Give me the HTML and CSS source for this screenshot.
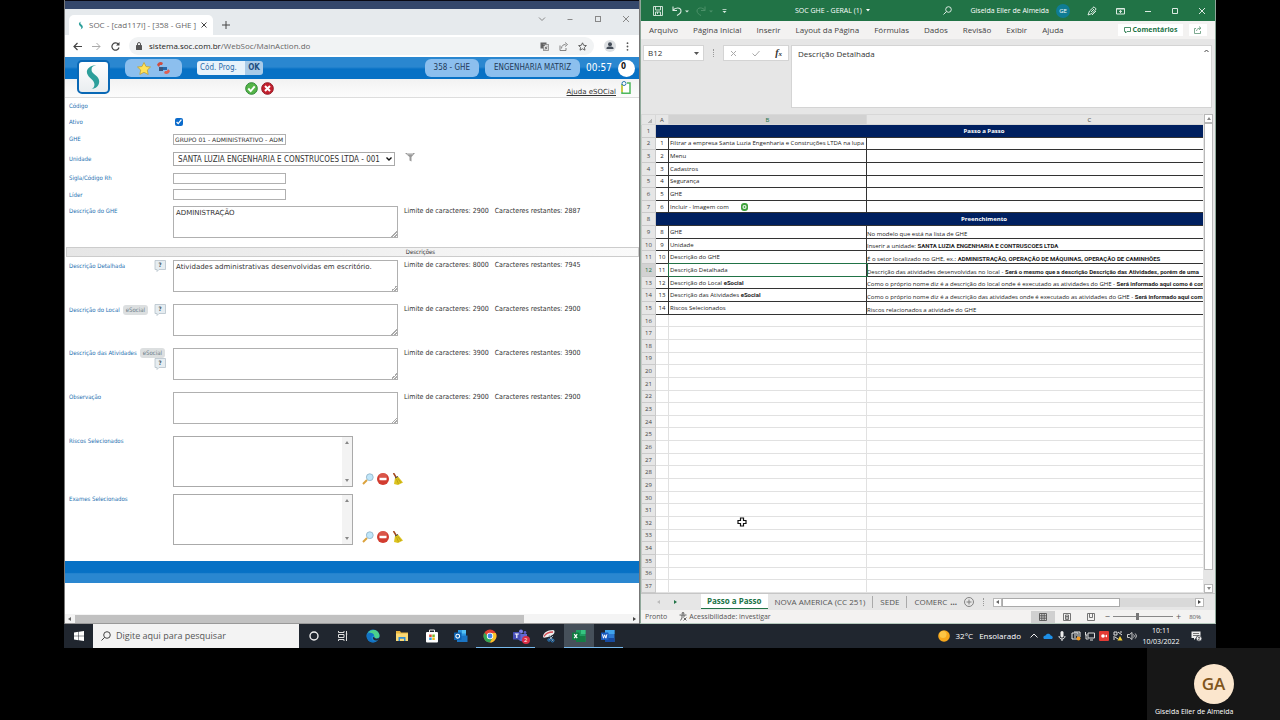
FILE: index.html
```html
<!DOCTYPE html>
<html lang="pt-BR">
<head>
<meta charset="utf-8">
<title>SOC - [cad117i] - [358 - GHE ]</title>
<link rel="stylesheet" href="styles.css">
</head>
<body>
<svg class="defs" aria-hidden="true">
  <symbol id="i-soc" viewBox="0 0 20 28"><path d="M13 1C4 2 1 7 4 12c2 4 7 5 7 10 0 2-1 4-3 5 7-1 10-7 7-12-2-4-8-5-7-10 0-2 2-3 5-4z" fill="#2d9f9b"/></symbol>
  <symbol id="i-lens" viewBox="0 0 12 12"><path d="M1 11l4-4" stroke="#dba23c" stroke-width="2"/><circle cx="7.800" cy="4.200" r="3.400" fill="#bfe6fa" stroke="#9bbccf"/></symbol>
  <symbol id="i-minus" viewBox="0 0 12 12"><circle cx="6" cy="6" r="6" fill="#d23c30"/><circle cx="6" cy="4" r="4" fill="#e0665a" opacity=".6"/><path d="M2.500 4.800h7v2.400h-7z" fill="#fff"/></symbol>
  <symbol id="i-broom" viewBox="0 0 12 12"><path d="M1.500 0l3 5" stroke="#a3441c" stroke-width="1.500"/><path d="M3 5l3-1.500 5 6-5 2.500-4-1z" fill="#dcc31f"/><path d="M3 5l3-1.500" stroke="#444"/><path d="M4.500 6l2 5M6 5.500l3 4.500" stroke="#aa920e" stroke-width=".6"/></symbol>
  <symbol id="i-help" viewBox="0 0 12 12"><path d="M1 .5h10.500v9H5L3 11.500V9.500H1z" fill="#e6edf1" stroke="#b5c2ca" stroke-width=".8"/></symbol>
</svg>

<main class="desktop">
  <section class="window browser">
    <div class="wallpaper"></div>
    <div class="tabstrip">
      <div class="tab">
        <svg class="favicon"><use href="#i-soc"/></svg>
        <span class="tab-title">SOC - [cad117i] - [358 - GHE ]</span>
        <button class="bare" aria-label="Fechar aba"><svg width="6" height="6" viewBox="0 0 6 6" stroke="#444"><path d="M.5.5l5 5M5.500.5l-5 5"/></svg></button>
      </div>
      <button class="bare plus" aria-label="Nova aba"><svg width="8" height="8" viewBox="0 0 8 8" stroke="#444"><path d="M4 0v8M0 4h8"/></svg></button>
      <div class="win-controls">
        <svg viewBox="0 0 8 8"><path d="M1 2.500l3 3 3-3"/></svg>
        <svg viewBox="0 0 8 8"><path d="M1.500 4.500h5"/></svg>
        <svg viewBox="0 0 8 8"><rect x="1.500" y="1.500" width="5" height="5"/></svg>
        <svg viewBox="0 0 8 8"><path d="M1 1l6 6M7 1L1 7"/></svg>
      </div>
    </div>
    <div class="toolbar">
      <button class="bare" aria-label="Voltar"><svg width="9" height="9" viewBox="0 0 9 9" fill="none" stroke="#444" stroke-width="1.200"><path d="M9 4.500H1M4.500 1L1 4.500 4.500 8"/></svg></button>
      <button class="bare" aria-label="Avançar"><svg width="9" height="9" viewBox="0 0 9 9" fill="none" stroke="#aaa"><path d="M0 4.500h8M4.500 1L8 4.500 4.500 8"/></svg></button>
      <button class="bare" aria-label="Recarregar"><svg width="9" height="9" viewBox="0 0 9 9" fill="none" stroke="#444" stroke-width="1.200"><path d="M7.500 2.500A3.600 3.600 0 1 0 8 5.500"/><path d="M8.500 0v3.500H5z" fill="#444" stroke="none"/></svg></button>
      <div class="omnibox">
        <svg width="6" height="8" viewBox="0 0 6 8"><rect y="3" width="6" height="5" rx=".6" fill="#555"/><path d="M1.500 3V2a1.500 1.500 0 0 1 3 0v1" fill="none" stroke="#555"/></svg>
        <span class="url">sistema.soc.com.br<span class="path">/WebSoc/MainAction.do</span></span>
        <svg class="push" width="9" height="9" viewBox="0 0 9 9"><rect x=".5" y=".5" width="6" height="6" fill="#666"/><rect x="3.500" y="2.500" width="5" height="6" fill="#ddd" stroke="#888" stroke-width=".8"/><path d="M2 3.500h3M5 5l2 2M7 4.500l-2 3" stroke="#555" stroke-width=".7"/></svg>
        <svg width="9" height="9" viewBox="0 0 9 9" fill="none" stroke="#777" stroke-width=".9"><path d="M1 3.500v5h6V6M2.500 6.500c0-3 2-4 4-4M6 .5l2.500 2L6 4.500"/></svg>
        <svg width="9" height="9" viewBox="0 0 9 9" fill="none" stroke="#555" stroke-width=".9"><path d="M4.500.8l1.200 2.500 2.700.3-2 1.800.6 2.800-2.500-1.400L2 8.200l.6-2.800-2-1.800 2.700-.3z"/></svg>
      </div>
      <svg width="12" height="12" viewBox="0 0 12 12"><circle cx="6" cy="6" r="6" fill="#dde0e3"/><circle cx="6" cy="4.200" r="2" fill="#444c58"/><path d="M2.500 9V7.800C3.500 6.200 8.500 6.200 9.500 7.800V9z" fill="#444c58"/></svg>
      <svg width="3" height="9" viewBox="0 0 3 9" fill="#555"><circle cx="1.500" cy="1.200" r=".9"/><circle cx="1.500" cy="4.500" r=".9"/><circle cx="1.500" cy="7.800" r=".9"/></svg>
    </div>

    <header class="soc-bar">
      <div class="soc-logo"><svg><use href="#i-soc"/></svg></div>
      <div class="pill icons">
        <svg width="14" height="13" viewBox="0 0 14 13"><path d="M7 .5l2 4 4.500.5-3.200 3 .9 4.500L7 10.300 2.800 12.500l.9-4.500L.5 5 5 4.500z" fill="#ffe257" stroke="#bfa13a" stroke-width=".8"/></svg>
        <svg width="15" height="14" viewBox="0 0 15 14"><path d="M1 4c1-3 4-4 6-2l-1 2-2 0-1 2z" fill="#cf4c40"/><path d="M14 10c-1 3-4 4-6 2l1-2 2 0 1-2z" fill="#dc6156"/><rect x="3" y="6" width="4" height="4" fill="#3a567e"/><rect x="7" y="6" width="4" height="3" fill="#2569ad"/></svg>
      </div>
      <div class="code-box">
        <input class="code-input" aria-label="Código do programa" value="Cód. Prog.">
        <button class="code-ok">OK</button>
      </div>
      <button class="pill text push">358 - GHE</button>
      <button class="pill text">ENGENHARIA MATRIZ</button>
      <span class="timer">00:57</span>
      <span class="count">0</span>
    </header>
    <div class="subbar">
      <button class="bare" aria-label="Gravar"><svg width="13" height="13" viewBox="0 0 13 13"><circle cx="6.500" cy="6.500" r="5.800" fill="#55b548" stroke="#2c8534"/><path d="M3.300 6.500l2.400 2.600 4-4.800" fill="none" stroke="#fff" stroke-width="1.900"/></svg></button>
      <button class="bare" aria-label="Cancelar"><svg width="13" height="13" viewBox="0 0 13 13"><circle cx="6.500" cy="6.500" r="5.800" fill="#c4202e" stroke="#8f1620"/><path d="M4 4l5 5M9 4L4 9" stroke="#fff" stroke-width="2"/></svg></button>
      <a class="help-link" href="#">Ajuda eSOCial</a>
      <svg class="book" width="10" height="13" viewBox="0 0 10 13"><path d="M1 3v9.200h8V2H6" fill="#fff" stroke="#4eb75b" stroke-width="1.500"/><path d="M1 4v7" stroke="#e0ce37" stroke-width="1.500"/><circle cx="3" cy="2.500" r="2" fill="#fff" stroke="#2978ab"/></svg>
    </div>

    <form class="form">
      <div class="row h15"><span class="label">Código</span></div>
      <div class="row h17"><label class="label" for="ativo">Ativo</label><input class="check" type="checkbox" id="ativo" checked></div>
      <div class="row h18"><label class="label" for="ghe">GHE</label><input class="line" id="ghe" value="GRUPO 01 - ADMINISTRATIVO - ADM"></div>
      <div class="row h22"><label class="label" for="unidade">Unidade</label>
        <span class="combo"><select id="unidade"><option>SANTA LUZIA ENGENHARIA E CONSTRUCOES LTDA - 001</option></select><svg class="combo-arrow" viewBox="0 0 6 4"><path d="M.5.5L3 3 5.500.5" fill="none" stroke="#111" stroke-width="1.400"/></svg></span>
        <svg class="funnel" width="10" height="10" viewBox="0 0 10 10"><path d="M0 1h10L6.500 5v4.500l-2-1V5z" fill="#999"/><path d="M2 1.800h6" stroke="#eee" stroke-width=".9"/></svg></div>
      <div class="row h16"><label class="label" for="sigla">Sigla/Código Rh</label><input class="line" id="sigla"></div>
      <div class="row h17"><label class="label" for="lider">Líder</label><input class="line" id="lider"></div>
      <div class="row tall"><label class="label" for="d1">Descrição do GHE</label><textarea id="d1">ADMINISTRAÇÃO</textarea><span class="limit"><span>Limite de caracteres: 2900</span><span>Caracteres restantes: 2887</span></span></div>
      <div class="section">Descrições</div>
      <div class="row tall"><span class="label"><label for="d2">Descrição Detalhada</label><span class="help"><svg><use href="#i-help"/></svg>?</span></span><textarea id="d2">Atividades administrativas desenvolvidas em escritório.</textarea><span class="limit"><span>Limite de caracteres: 8000</span><span>Caracteres restantes: 7945</span></span></div>
      <div class="row tall"><span class="label"><label for="d3">Descrição do Local</label><span class="tag">eSocial</span><span class="help"><svg><use href="#i-help"/></svg>?</span></span><textarea id="d3"></textarea><span class="limit"><span>Limite de caracteres: 2900</span><span>Caracteres restantes: 2900</span></span></div>
      <div class="row tall"><span class="label"><label for="d4">Descrição das Atividades</label><span class="tag">eSocial</span><span class="help"><svg><use href="#i-help"/></svg>?</span></span><textarea id="d4"></textarea><span class="limit"><span>Limite de caracteres: 3900</span><span>Caracteres restantes: 3900</span></span></div>
      <div class="row tall"><label class="label" for="d5">Observação</label><textarea id="d5"></textarea><span class="limit"><span>Limite de caracteres: 2900</span><span>Caracteres restantes: 2900</span></span></div>
      <div class="row list"><label class="label" for="l1">Riscos Selecionados</label>
        <span class="listbox"><select id="l1" multiple></select><span class="list-scroll"><i class="up"></i><i class="down"></i></span></span>
        <span class="tools"><svg><use href="#i-lens"/></svg><svg><use href="#i-minus"/></svg><svg><use href="#i-broom"/></svg></span></div>
      <div class="row list"><label class="label" for="l2">Exames Selecionados</label>
        <span class="listbox"><select id="l2" multiple></select><span class="list-scroll"><i class="up"></i><i class="down"></i></span></span>
        <span class="tools"><svg><use href="#i-lens"/></svg><svg><use href="#i-minus"/></svg><svg><use href="#i-broom"/></svg></span></div>
    </form>
    <div class="soc-foot"></div>
    <div class="h-scroll"><i class="left"></i><span class="h-track"><span class="h-thumb"></span></span><i class="right"></i></div>
  </section>

  <section class="window excel">
    <div class="x-title">
      <svg width="10" height="10" viewBox="0 0 10 10" fill="none" stroke="#dcebe2" stroke-width=".9"><path d="M.5.5h9v9h-9zM2.500.5v3.500h5V.5M2.500 9.500V6h5v3.500M4.500 6v2"/></svg>
      <svg class="undo" width="17" height="10" viewBox="0 0 17 10" fill="none" stroke="#dcebe2" stroke-width="1.100"><path d="M1 .5v4h4M1 4.500C3 1 9 1 9 5c0 2-2 3.500-4 4.500"/><path d="M13 4.500h4l-2 2z" fill="#dcebe2" stroke="none"/></svg>
      <svg width="17" height="10" viewBox="0 0 17 10" fill="none" stroke="#4c9169"><path d="M9 .5v4H5M9 4.500C7 1 1 1 1 5c0 2 2 3.500 4 4.500"/><path d="M13 4.500h4l-2 2z" fill="#4c9169" stroke="none"/></svg>
      <svg width="5" height="6" viewBox="0 0 5 6" fill="#dcebe2"><path d="M.5 1h4v.8h-4zM.5 3h4L2.500 5z"/></svg>
      <span class="x-name">SOC GHE - GERAL (1) <svg width="4" height="3" viewBox="0 0 4 3"><path d="M0 0h4L2 2.500z" fill="#fff"/></svg></span>
      <div class="x-right">
        <svg width="9" height="9" viewBox="0 0 9 9" fill="none" stroke="#dcebe2"><circle cx="5.500" cy="3.500" r="2.800"/><path d="M3.500 5.500L.5 8.500"/></svg>
        <span class="x-user">Giselda Eller de Almeida</span>
        <span class="x-avatar">GE</span>
        <svg width="10" height="10" viewBox="0 0 10 10" fill="none" stroke="#dcebe2"><path d="M1 9l1.500-4L7 .8 9.200 3 5 7.500zM4 6l3-3M5 9l4-4"/></svg>
        <svg width="9" height="8" viewBox="0 0 9 8" fill="none" stroke="#dcebe2"><path d="M.5 1.500h8v5.500h-8zM.5 2h8M4.500 6V3.500M3 4.800l1.500-1.300L6 4.800"/></svg>
        <svg width="8" height="8" viewBox="0 0 8 8" stroke="#dcebe2"><path d="M1 4.500h6"/></svg>
        <svg width="8" height="8" viewBox="0 0 8 8" fill="none" stroke="#dcebe2"><path d="M1.500 1.500h5v5h-5z"/></svg>
        <svg width="8" height="8" viewBox="0 0 8 8" stroke="#dcebe2"><path d="M1 1l6 6M7 1L1 7"/></svg>
      </div>
    </div>
    <nav class="ribbon">
      <button>Arquivo</button><button>Página Inicial</button><button>Inserir</button><button>Layout da Página</button><button>Fórmulas</button><button>Dados</button><button>Revisão</button><button>Exibir</button><button>Ajuda</button>
      <button class="comments"><svg width="7" height="7" viewBox="0 0 7 7" fill="none" stroke="#217346" stroke-width=".8"><path d="M.5.5h6v4H3L1.500 6V4.500h-1z"/></svg>Comentários</button>
      <button class="share" aria-label="Compartilhar"><svg width="8" height="8" viewBox="0 0 8 8" fill="none" stroke="#5e9676" stroke-width=".8"><path d="M2 2.500H.5v5h6V5M2.500 5c0-2 2-2.800 4-2.800M5 .5l2 1.700-2 1.600"/></svg></button>
    </nav>
    <div class="formula">
      <div class="name-box"><input aria-label="Caixa de nome" value="B12"><svg width="5" height="3" viewBox="0 0 5 3"><path d="M0 0h5L2.500 3z" fill="#555"/></svg></div>
      <span class="grip"></span>
      <div class="fx">
        <svg width="7" height="7" viewBox="0 0 7 7" stroke="#aaa"><path d="M1 1l5 5M6 1L1 6"/></svg>
        <svg width="8" height="7" viewBox="0 0 8 7" fill="none" stroke="#aaa"><path d="M.5 3.500L3 6l4.500-5"/></svg>
        <span class="fx-text">f<small>x</small></span>
      </div>
      <div class="formula-text"><textarea aria-label="Barra de fórmulas">Descrição Detalhada</textarea><svg width="5" height="4" viewBox="0 0 5 4" fill="none" stroke="#444"><path d="M.5 3l2-2 2 2"/></svg></div>
    </div>
    <div class="sheet-area">
      <div class="sheet">
        <table>
          <colgroup><col class="c-num"><col class="c-a"><col class="c-b"><col class="c-c"></colgroup>
          <thead><tr><th class="corner"></th><th>A</th><th class="sel">B</th><th>C</th></tr></thead>
          <tbody class="filled">
            <tr class="band"><th>1</th><td colspan="3">Passo a Passo</td></tr>
            <tr><th>2</th><td>1</td><td>Filtrar a empresa Santa Luzia Engenharia e Construções LTDA na lupa</td><td></td></tr>
            <tr><th>3</th><td>2</td><td>Menu</td><td></td></tr>
            <tr><th>4</th><td>3</td><td>Cadastros</td><td></td></tr>
            <tr><th>5</th><td>4</td><td>Segurança</td><td></td></tr>
            <tr><th>6</th><td>5</td><td>GHE</td><td></td></tr>
            <tr><th>7</th><td>6</td><td><span class="with-icon">Incluir - Imagem com <svg width="7" height="8" viewBox="0 0 7 8"><rect width="7" height="8" rx="3" fill="#3fa23c"/><circle cx="3.500" cy="4" r="2" fill="#fff"/><path d="M3.500 2.800v2.400M2.300 4h2.400" stroke="#3fa23c" stroke-width=".8"/></svg></span></td><td></td></tr>
            <tr class="band"><th>8</th><td colspan="3">Preenchimento</td></tr>
            <tr><th>9</th><td>8</td><td>GHE</td><td>No modelo que está na lista de GHE</td></tr>
            <tr><th>10</th><td>9</td><td>Unidade</td><td>Inserir a unidade: <b>SANTA LUZIA ENGENHARIA E CONTRUSCOES LTDA</b></td></tr>
            <tr><th>11</th><td>10</td><td>Descrição do GHE</td><td>É o setor localizado no GHE, ex.: <b>ADMINISTRAÇÃO, OPERAÇÃO DE MÁQUINAS, OPERAÇÃO DE CAMINHÕES</b></td></tr>
            <tr><th class="sel">12</th><td>11</td><td class="active">Descrição Detalhada</td><td>Descrição das atividades desenvolvidas no local - <b>Será o mesmo que a descrição Descrição das Atividades, porém de uma</b></td></tr>
            <tr><th>13</th><td>12</td><td>Descrição do Local <b>eSocial</b></td><td>Como o próprio nome diz é a descrição do local onde é executado as atividades do GHE - <b>Será informado aqui como é con</b></td></tr>
            <tr><th>14</th><td>13</td><td>Descrição das Atividades <b>eSocial</b></td><td>Como o próprio nome diz é a descrição das atividades onde é executado as atividades do GHE - <b>Será informado aqui com</b></td></tr>
            <tr><th>15</th><td>14</td><td>Riscos Selecionados</td><td>Riscos relacionados a atividade do GHE</td></tr>
          </tbody>
          <tbody>
            <tr><th>16</th><td></td><td></td><td></td></tr>
            <tr><th>17</th><td></td><td></td><td></td></tr>
            <tr><th>18</th><td></td><td></td><td></td></tr>
            <tr><th>19</th><td></td><td></td><td></td></tr>
            <tr><th>20</th><td></td><td></td><td></td></tr>
            <tr><th>21</th><td></td><td></td><td></td></tr>
            <tr><th>22</th><td></td><td></td><td></td></tr>
            <tr><th>23</th><td></td><td></td><td></td></tr>
            <tr><th>24</th><td></td><td></td><td></td></tr>
            <tr><th>25</th><td></td><td></td><td></td></tr>
            <tr><th>26</th><td></td><td></td><td></td></tr>
            <tr><th>27</th><td></td><td></td><td></td></tr>
            <tr><th>28</th><td></td><td></td><td></td></tr>
            <tr><th>29</th><td></td><td></td><td></td></tr>
            <tr><th>30</th><td></td><td></td><td></td></tr>
            <tr><th>31</th><td></td><td></td><td></td></tr>
            <tr><th>32</th><td></td><td></td><td></td></tr>
            <tr><th>33</th><td></td><td></td><td></td></tr>
            <tr><th>34</th><td></td><td></td><td></td></tr>
            <tr><th>35</th><td></td><td></td><td></td></tr>
            <tr><th>36</th><td></td><td></td><td></td></tr>
            <tr><th>37</th><td></td><td></td><td></td></tr>
          </tbody>
        </table>
        <svg class="cursor" width="10" height="10" viewBox="0 0 10 10"><path d="M3.500 1h3v2.500H9v3H6.500V9h-3V6.500H1v-3h2.500z" fill="#fff" stroke="#111" stroke-width="1.200"/></svg>
      </div>
      <div class="v-scroll"><span class="sb"><i class="up"></i></span><span class="v-thumb"></span><span class="sb"><i class="down"></i></span></div>
    </div>
    <div class="sheet-tabs">
      <span class="arrows"><i class="left"></i><i class="right"></i></span>
      <button class="s-tab current">Passo a Passo</button>
      <button class="s-tab">NOVA AMERICA (CC 251)</button>
      <button class="s-tab">SEDE</button>
      <button class="s-tab last">COMERC</button>
      <span class="dots">...</span>
      <button class="bare" aria-label="Nova planilha"><svg width="10" height="10" viewBox="0 0 10 10" fill="none" stroke="#777" stroke-width=".9"><circle cx="5" cy="5" r="4.500"/><path d="M5 2.500v5M2.500 5h5"/></svg></button>
      <span class="grip"></span>
      <div class="x-hscroll"><span class="sb"><i class="left"></i></span><span class="x-thumb"></span><span class="sb end"><i class="right"></i></span></div>
    </div>
    <footer class="status">
      <span>Pronto</span>
      <svg width="8" height="9" viewBox="0 0 8 9" fill="none" stroke="#555" stroke-width=".9"><circle cx="4" cy="1.300" r=".9"/><path d="M.5 3h7M3 3v3L1.500 8.500M5 3v2M4.500 5.500l3 3M7.500 5.500l-3 3"/></svg>
      <span>Acessibilidade: investigar</span>
      <div class="views">
        <span class="view on"><svg width="8" height="8" viewBox="0 0 8 8" fill="none" stroke="#555" stroke-width=".9"><path d="M.5.5h7v7h-7zM.5 2.800h7M.5 5.200h7M2.800.5v7M5.200.5v7"/></svg></span>
        <span class="view"><svg width="8" height="8" viewBox="0 0 8 8" fill="none" stroke="#666" stroke-width=".9"><path d="M.5.5h7v7h-7zM2.500 2h3v4.500h-3zM2.500 3.500h3M2.500 5h3"/></svg></span>
        <span class="view"><svg width="8" height="8" viewBox="0 0 8 8" fill="none" stroke="#666" stroke-width=".9"><path d="M.5.5h7v7h-7zM2.500.5v4h3v-4"/></svg></span>
      </div>
      <span class="zoom"><i>−</i><span class="slider"><span class="knob"></span></span><i>+</i></span>
      <span class="pct">80%</span>
    </footer>
  </section>

  <nav class="taskbar">
    <button class="start" aria-label="Iniciar"><svg width="10" height="10" viewBox="0 0 10 10" fill="#fff"><path d="M0 1.500l4.500-.7v4H0zM5 .7L10 0v4.800H5zM0 5.300h4.500v4L0 8.600zM5 5.300h5V10l-5-.7z"/></svg></button>
    <div class="search"><svg width="10" height="10" viewBox="0 0 10 10" fill="none" stroke="#444"><circle cx="6" cy="4" r="3.300"/><path d="M3.700 6.300L.5 9.500"/></svg><input aria-label="Pesquisar" placeholder="Digite aqui para pesquisar"></div>
    <div class="apps">
      <span class="app"><svg viewBox="0 0 14 14"><circle cx="7" cy="7" r="4" fill="none" stroke="#eee" stroke-width="1.400"/></svg></span>
      <span class="app"><svg viewBox="0 0 14 14" fill="none" stroke="#ddd"><path d="M2.500 2v1.500h5.500V2M2.500 12v-1.500h5.500V12M2.500 5.500h5.500v3H2.500zM10.500 2v10M9.800 5h1.500"/></svg></span>
      <span class="app"><svg viewBox="0 0 14 14"><circle cx="7" cy="7" r="6.500" fill="#1c86d1"/><path d="M2 3.500C5-.5 13 0 13.500 7c0 2.500-4 3-5 1.500C9 6 6 3 2 3.500z" fill="#4bd08b"/><path d="M.8 6C3 2.500 8 4 8 6.500 7 6 5 7 5.500 9.500 6 12 9 13 11.500 11.500 8 15 0 13.500.8 6z" fill="#1272c4"/><path d="M8.500 8.500C9 10 12 10 13.300 8.500L12 11C9 12.500 6.500 11 7 8z" fill="#232a34"/></svg></span>
      <span class="app"><svg viewBox="0 0 14 14"><path d="M1 2h4l1 1.500h7V12H1z" fill="#e8b43e"/><path d="M1 4.500h12V12H1z" fill="#fbd974"/><path d="M3.500 12V8h7v4H9V9.800H5V12z" fill="#358fd2"/></svg></span>
      <span class="app"><svg viewBox="0 0 14 14"><path d="M4.500 3V1h5v2" fill="none" stroke="#eee"/><rect x="1" y="3" width="12" height="10.500" rx="1" fill="#fff"/><path d="M4.200 5.500h2.500V8H4.200z" fill="#e5482d"/><path d="M7.300 5.500h2.500V8H7.300z" fill="#77b82a"/><path d="M4.200 8.500h2.500V11H4.200z" fill="#2c9fe5"/><path d="M7.300 8.500h2.500V11H7.300z" fill="#f7b912"/></svg></span>
      <span class="app"><svg viewBox="0 0 14 14"><path d="M4 1h8v7H4z" fill="#2a95df"/><path d="M8 1h4v3.500H8z" fill="#54c1f4"/><path d="M3 7l10.500-.5V13H3z" fill="#1b75c4"/><rect y="3.500" width="7.500" height="7.500" rx=".6" fill="#0d62b1"/><circle cx="3.700" cy="7.200" r="1.900" fill="none" stroke="#fff" stroke-width="1.100"/></svg></span>
      <span class="app run"><svg viewBox="0 0 14 14"><circle cx="7" cy="7" r="6.500" fill="#e44335"/><path d="M1.400 3.700A6.500 6.500 0 0 0 7 13.500L9.800 8.500 7 9z" fill="#34a653"/><path d="M7 13.500A6.500 6.500 0 0 0 12.700 4H7l2.800 4.500z" fill="#f8c428"/><circle cx="7" cy="7" r="3.200" fill="#fff"/><circle cx="7" cy="7" r="2.400" fill="#4186ee"/></svg></span>
      <span class="app run"><svg viewBox="0 0 14 14"><circle cx="8" cy="2.500" r="2" fill="#7b83eb"/><circle cx="12" cy="3.500" r="1.400" fill="#5b61c8"/><path d="M5 5h9v4c0 4-7 4.500-9 1z" fill="#6068d2"/><rect y="3" width="7.500" height="7.500" rx=".6" fill="#464eb8"/><path d="M1.800 5h4M3.800 5v4" stroke="#fff" stroke-width="1.200"/></svg><span class="badge">2</span></span>
      <span class="app"><svg viewBox="0 0 14 14"><path d="M1 8C1 4 5 1 11 1c2 0 2 3 0 4.500S2 10 1 8z" fill="#eee"/><path d="M2 7.500C4 4 8 3 11 3" stroke="#d64b52" stroke-width="1.300" fill="none"/><path d="M7 6l4 6M11 7l-4 4" stroke="#9bb1c3"/><circle cx="10.500" cy="11.500" r="1.500" fill="none" stroke="#2f82c9"/><circle cx="7" cy="11" r="1.200" fill="none" stroke="#2f82c9"/></svg></span>
      <span class="app run on"><svg viewBox="0 0 14 14"><path d="M4 1h9.500v12H4z" fill="#1f9f62"/><path d="M9 1h4.500v4H9z" fill="#36c481"/><path d="M4 7h9.500v6H4z" fill="#157c45"/><rect y="3.500" width="7.500" height="7.500" rx=".6" fill="#107c41"/><path d="M2.200 5.200l3 4M5.200 5.200l-3 4" stroke="#fff" stroke-width="1.200"/></svg></span>
      <span class="app run"><svg viewBox="0 0 14 14"><path d="M4 1h9.500v12H4z" fill="#2b78d1"/><path d="M4 1h9.500v4H4z" fill="#41a4ec"/><path d="M4 9h9.500v4H4z" fill="#164aa0"/><rect y="3.500" width="7.500" height="7.500" rx=".6" fill="#185abd"/><path d="M1.500 5.300l1 3.900 1.200-3.400 1.200 3.400 1-3.900" fill="none" stroke="#fff"/></svg></span>
    </div>
    <div class="tray">
      <svg class="sun" viewBox="0 0 12 12"><circle cx="6" cy="6" r="5.800" fill="#f8a81c"/><circle cx="5" cy="4.500" r="3.500" fill="#fcc545"/></svg>
      <span class="weather"><span>32°C</span><span>Ensolarado</span></span>
      <span class="tray-icons">
        <svg viewBox="0 0 10 10" fill="none" stroke="#eee"><path d="M1.500 6.500L5 3l3.500 3.500"/></svg>
        <svg viewBox="0 0 10 10"><path d="M1 8C-.5 6 1 4.500 2.500 4.500 3.500 2 7 2 7.700 4.500 9.500 4.500 10.500 7 9 8z" fill="#1e8fe6"/></svg>
        <svg viewBox="0 0 10 10"><rect x="3.500" y="0" width="3" height="6.500" rx="1.500" fill="#eee"/><path d="M2 5c0 4 6 4 6 0M5 8v2" fill="none" stroke="#eee"/></svg>
        <svg viewBox="0 0 10 10"><path d="M1 2h6v6H1zM3 1h6v5M3 4h3M3 6h2" fill="none" stroke="#eee"/><circle cx="7.500" cy="7.500" r="2" fill="#f19a24"/></svg>
        <svg viewBox="0 0 10 10"><path d="M3 2h6.500v5H3zM.5 1v3h2M1 4v4h2.500M5 9h3" fill="none" stroke="#ddd"/></svg>
        <svg viewBox="0 0 10 10"><rect width="10" height="10" rx="1" fill="#e33b35"/><circle cx="4" cy="5" r="1.800" fill="#fff"/><path d="M6 5l2-1.500v3z" fill="#fff"/></svg>
        <svg viewBox="0 0 10 10"><path d="M1 1h3v3H1zM1 5v4M5 1l4 3M2 6l3 2M7 1h2" fill="none" stroke="#ddd"/><path d="M4.500 9.500L7 5l2.500 4.500z" fill="#f2ce36"/></svg>
        <svg viewBox="0 0 10 10"><path d="M.5 3.500h2L5 1.500v7L2.500 6.500h-2zM6.500 3.500c1 1 1 2 0 3M8.200 2.500c1.500 2 1.500 3 0 5" fill="none" stroke="#ddd" stroke-width=".9"/></svg>
      </span>
      <span class="clock"><span>10:11</span><span>10/03/2022</span></span>
      <svg class="note" viewBox="0 0 11 11"><path d="M.5.5h9v6.500H5L3 9V7H.5z" fill="#eee"/><path d="M2 2.500h6M2 4.500h6" stroke="#555" stroke-width=".8"/><circle cx="8" cy="7.500" r="2.800" fill="#eee" stroke="#232a34" stroke-width=".7"/><path d="M7 6.500h2L7 9h2" fill="none" stroke="#444" stroke-width=".7"/></svg>
    </div>
  </nav>
</main>
<aside class="call">
  <div class="participant"><span class="avatar">GA</span><span class="who">Giselda Eller de Almeida</span></div>
</aside>
</body>
</html>
```
FILE: styles.css
```css
* { box-sizing: border-box; }
body { margin: 0; height: 100vh; display: flex; flex-direction: column; background: #000; font-family: "Open Sans", "Noto Sans", sans-serif; font-size: 8px; line-height: 10px; color: #333; overflow: hidden; }
button, input, select, textarea { font: inherit; color: inherit; margin: 0; padding: 0; border: 0; border-radius: 0; background: none; outline: 0; }
svg { flex: none; display: block; }
.defs { position: absolute; width: 0; height: 0; }
.bare { display: flex; }
.push { margin-left: auto; }
i { font-style: normal; }
.up, .down, .left, .right { display: block; width: 0; height: 0; border: 2px solid transparent; }
.up { border-top: 0; border-bottom: 3px solid #888; }
.down { border-bottom: 0; border-top: 3px solid #888; }
.left { border-left: 0; border-right: 3px solid #666; }
.right { border-right: 0; border-left: 3px solid #444; }

.desktop { flex: 1; min-height: 0; padding: 0 5%; display: grid; grid-template-columns: 1fr 1fr; grid-template-rows: minmax(0, 1fr) 24px; }
.window { display: flex; flex-direction: column; min-width: 0; min-height: 0; overflow: hidden; }

/* Browser */
.browser { background: #fff; border-left: 1px solid #777; border-right: 1px solid #777; }
.wallpaper { height: 9px; background: #34476b; border-top: 1px solid #080812; }
.tabstrip { height: 26px; background: #e6eaed; display: flex; align-items: stretch; padding-top: 6px; }
.tab { width: 144px; margin-left: 4px; padding: 0 6px 0 9px; background: #fff; border-radius: 5px 5px 0 0; display: flex; align-items: center; gap: 5px; color: #666; }
.favicon { width: 6px; height: 9px; }
.tab-title { flex: 1; white-space: nowrap; }
.plus { padding: 0 9px; align-items: center; }
.win-controls { margin-left: auto; display: flex; gap: 20px; padding-right: 9px; }
.win-controls svg { width: 8px; height: 8px; fill: none; stroke: #888; }
.toolbar { height: 22px; display: flex; align-items: center; gap: 10px; padding: 0 10px 0 8px; }
.omnibox { flex: 1; height: 18px; margin-left: -1px; border-radius: 9px; background: #f1f3f4; display: flex; align-items: center; gap: 10px; padding: 0 7px; }
.url { color: #222; margin-left: -3px; }
.path { color: #666; }

.soc-bar { height: 22px; padding: 0 4px 0 12px; background: linear-gradient(#2a87d0 0 45%, #0771c5 55%); display: flex; align-items: center; gap: 6px; font-family: "DejaVu Sans Condensed", "DejaVu Sans", sans-serif; }
.soc-logo { align-self: flex-start; position: relative; z-index: 1; width: 33px; height: 34px; margin: 3px 9px 0 0; border: 2px solid #0968b5; border-radius: 5px; background: linear-gradient(#fff, #e9edf0); display: flex; justify-content: center; align-items: center; }
.soc-logo svg { width: 19px; height: 26px; }
.pill { height: 18px; border-radius: 6px; background: #8cbfee; display: flex; align-items: center; justify-content: center; gap: 5px; }
.icons { width: 57px; margin-right: 9px; }
.text { padding: 0 9px; color: #223a58; }
.code-box { display: flex; width: 66px; height: 14px; border-radius: 3px; overflow: hidden; color: #2b6aa8; }
.code-input { width: 48px; padding-left: 3px; background: #e6f2fb; }
.code-ok { flex: 1; background: #a9cbe8; color: #1d4e80; font-weight: bold; }
.timer { color: #fff; font-size: 10px; }
.count { width: 17px; height: 17px; border-radius: 9px; background: #fff; color: #111; font-weight: bold; padding: 2px 0 0 3px; }
.subbar { height: 19px; border-bottom: 1px solid #ddd; background: linear-gradient(#f2f2f2, #fcfcfc); display: flex; gap: 3px; padding: 3px 8px 0 180px; align-items: flex-start; }
.help-link { margin-left: auto; padding-top: 6px; color: #333; text-decoration: underline; font-family: "DejaVu Sans", sans-serif; font-size: 7px; line-height: 8px; }
.book { margin: -1px 0 0 2px; }

/* Form */
.form { font-family: "DejaVu Sans Condensed", "DejaVu Sans", sans-serif; font-size: 7px; color: #333; }
.row { display: flex; align-items: center; padding-left: 4px; }
.h15 { height: 15px; } .h16 { height: 16px; } .h17 { height: 17px; } .h18 { height: 18px; } .h22 { height: 22px; }
.label { flex: none; width: 104px; display: flex; flex-wrap: wrap; align-items: center; gap: 0 3px; padding-right: 7px; color: #1d6fb0; font-size: 6px; white-space: nowrap; }
.check { width: 8px; height: 8px; margin-left: 2px; accent-color: #0b6bcb; }
.line { width: 113px; height: 11px; padding: 0 0 0 1px; border: 1px solid #b0b0b0; font-family: "DejaVu Sans", sans-serif; font-size: 6px; }
.combo { position: relative; width: 222px; }
.combo select { appearance: none; display: block; width: 100%; height: 14px; padding: 1px 4px 0; border: 1px solid #aaa; background: #fff; font-size: 8px; }
.combo-arrow { position: absolute; right: 3px; top: 5px; width: 6px; height: 4px; }
.funnel { margin: -5px 0 0 10px; }
.tall { height: 44px; align-items: flex-start; padding-top: 3px; }
.tall textarea { flex: none; width: 225px; height: 32px; padding: 1px 2px; border: 1px solid #b0b0b0; resize: none; overflow: hidden; font-family: "DejaVu Sans", sans-serif; background: linear-gradient(135deg, transparent 50%, #aaa 50% 60%, transparent 60% 74%, #aaa 74% 84%, transparent 84%) right bottom / 6px 6px no-repeat; }
.limit { display: flex; gap: 6px; padding-left: 6px; white-space: nowrap; }
.help { position: relative; z-index: 0; width: 12px; height: 11px; margin-left: auto; text-align: center; color: #456; font-weight: bold; line-height: 10px; }
.help svg { position: absolute; inset: 0; width: 12px; height: 12px; z-index: -1; }
.tag { padding: 0 3px; border-radius: 3px; background: #dcdfe0; color: #6b7d88; margin-right: -2px; }
.section { height: 10px; margin: 0 0 0 1px; padding-left: 136px; border: 1px solid #ccc; background: linear-gradient(90deg, #e6e6e6, #fafafa); text-align: center; font-size: 6px; line-height: 8px; }
.list { height: 58px; align-items: flex-start; padding-top: 3px; }
.listbox { display: flex; width: 180px; height: 51px; border: 1px solid #aaa; }
.listbox select { flex: 1; min-width: 0; height: 100%; overflow: hidden; }
.list-scroll { width: 10px; background: #f3f3f3; display: flex; flex-direction: column; justify-content: space-between; align-items: center; padding: 4px 0; }
.tools { display: flex; gap: 3px; padding: 37px 0 0 9px; }
.tools svg { width: 12px; height: 12px; }
.soc-foot { height: 22px; margin: 12px 0 0 0; background: linear-gradient(#0771c5 0 52%, #2a87d0 58%); }
.h-scroll { height: 10px; margin-top: auto; background: #f4f4f4; display: flex; align-items: center; gap: 4px; padding: 0 3px; border-bottom: 1px solid #999; }
.h-track { flex: 1; height: 8px; }
.h-thumb { display: block; width: 81%; height: 8px; background: #c1c1c1; }

/* Spreadsheet */
.excel { background: #e6e6e6; border-left: 1px solid #8fa89a; border-right: 1px solid #8fa89a; border-bottom: 1px solid #b4c8bc; }
.x-title { height: 21px; background: #217346; color: #fff; display: flex; align-items: center; gap: 9px; padding: 0 9px 0 12px; font-size: 7px; }
.undo { margin-right: -2px; }
.x-name { display: flex; align-items: center; gap: 4px; margin-left: 59px; white-space: nowrap; }
.x-right { margin-left: auto; display: flex; align-items: center; gap: 19px; white-space: nowrap; }
.x-user { margin-right: -12px; }
.x-avatar { width: 14px; height: 14px; border-radius: 7px; background: #0f7c94; text-align: center; line-height: 14px; font-size: 6px; margin-right: -2px; }
.ribbon { height: 18px; background: #f3f2f1; display: flex; align-items: center; gap: 15px; padding: 0 8px; color: #444; white-space: nowrap; }
.comments, .share { height: 12px; background: #fff; color: #217346; display: flex; align-items: center; justify-content: center; gap: 2px; }
.comments { width: 65px; margin-left: auto; font-weight: bold; font-size: 7px; }
.share { width: 18px; margin-left: -9px; }
.formula { height: 75px; padding: 6px 3px 6px 2px; display: flex; align-items: flex-start; background: #e6e6e6; }
.name-box, .fx { height: 16px; background: #fff; border: 1px solid #d4d4d4; display: flex; align-items: center; }
.name-box { width: 61px; padding: 0 4px; }
.name-box input { flex: 1; min-width: 0; }
.grip { width: 1px; height: 8px; margin: 4px 9px; border-left: 1px dotted #999; }
.fx { width: 66px; justify-content: space-between; padding: 0 6px; }
.fx-text { font-family: "Liberation Serif", serif; font-style: italic; font-weight: bold; font-size: 10px; }
.fx-text small { font-size: 7px; }
.formula-text { flex: 1; align-self: stretch; margin-left: 2px; background: #fff; border: 1px solid #d4d4d4; display: flex; align-items: flex-start; padding: 3px 2px 0 6px; }
.formula-text textarea { flex: 1; resize: none; height: 50px; }
.sheet-area { flex: 1; min-height: 0; display: flex; border-bottom: 1px solid #c6c6c6; }
.sheet { flex: 1; min-width: 0; position: relative; overflow: hidden; }
table { width: 671px; height: 100%; table-layout: fixed; border-collapse: collapse; background: #fff; font-family: "Open Sans", sans-serif; font-size: 6px; line-height: 8px; color: #222; }
.c-num { width: 14px; } .c-a { width: 13px; } .c-b { width: 198px; } .c-c { width: 446px; }
th, td { padding: 0; border: 1px solid #e1e1e1; overflow: hidden; white-space: nowrap; text-align: left; }
th { background: #e6e6e6; border-color: #cacaca; text-align: center; font-weight: normal; color: #444; }
td b { font-family: Roboto, sans-serif; }
thead th { height: 10px; border-color: #d8d8d8; }
th.sel { background: #d2d2d2; color: #217346; }
.corner { background: linear-gradient(135deg, transparent 65%, #b5b5b5 65%) center / 6px 6px no-repeat #e6e6e6; }
.filled td { border-color: #333; }
.filled td:nth-child(2) { text-align: center; }
.filled td:nth-child(3) { padding-left: 1px; }
.filled td:nth-child(4) { vertical-align: bottom; }
.filled .band td { background: #002060; color: #fff; font-weight: bold; text-align: center; }
.filled td.active { outline: 1px solid #217346; outline-offset: 0; }
.with-icon { display: flex; align-items: center; gap: 12px; }
.cursor { position: absolute; left: 96px; bottom: 66px; }
.v-scroll { width: 11px; margin-right: 1px; display: flex; flex-direction: column; align-items: stretch; }
.sb { width: 9px; height: 9px; border: 1px solid #b8b8b8; background: #fff; display: flex; align-items: center; justify-content: center; margin-left: 1px; flex: none; }
.v-thumb { flex: 1; margin: 0 0 14px 1px; width: 9px; border: 1px solid #b8b8b8; background: #fff; }
.sheet-tabs { height: 16px; display: flex; align-items: center; padding-right: 11px; color: #555; }
.arrows { width: 60px; padding: 0 24px 0 16px; display: flex; justify-content: space-between; }
.arrows .left { border-right-color: #bbb; }
.arrows .right { border-left-color: #217346; }
.s-tab { height: 12px; padding: 0 7px; border-right: 1px solid #aaa; white-space: nowrap; }
.current { height: 15px; align-self: flex-start; padding: 0 6px; background: #fff; border: 0; border-bottom: 1px solid #217346; color: #217346; font-weight: bold; }
.last { border: 0; padding-right: 0; }
.dots { padding: 0 7px 0 3px; font-weight: bold; }
.x-hscroll { flex: 1; display: flex; background: #d9d9d9; height: 9px; }
.x-hscroll .sb { margin: 0; }
.x-thumb { width: 118px; border: 1px solid #aaa; background: #fff; }
.x-hscroll .end { margin-left: auto; }
.status { height: 13px; flex: none; background: #f3f2f1; display: flex; align-items: center; gap: 12px; padding: 0 14px 0 4px; color: #555; font-size: 7px; }
.status svg + span { margin-left: -10px; }
.views { margin-left: auto; display: flex; }
.view { width: 24px; height: 12px; display: flex; align-items: center; justify-content: center; }
.on { background: #d0d0d0; }
.zoom { display: flex; align-items: center; gap: 3px; font-size: 9px; margin-left: -10px; }
.slider { width: 60px; height: 7px; display: flex; justify-content: center; background: linear-gradient(#888, #888) center / 100% 1px no-repeat; }
.knob { width: 3px; height: 7px; background: #777; margin-right: 12px; }
.pct { font-size: 6px; margin-left: -4px; }

/* Taskbar */
.taskbar { grid-column: 1 / -1; background: #20262f; display: flex; align-items: stretch; color: #fff; white-space: nowrap; }
.start { width: 29px; display: flex; align-items: center; justify-content: center; }
.search { width: 206px; background: #f3f3f3; display: flex; align-items: center; gap: 5px; padding: 0 8px; color: #444; font-size: 9px; }
.search input { flex: 1; min-width: 0; }
.search input::placeholder { color: #555; opacity: 1; }
.apps { width: 324px; display: flex; }
.app { position: relative; flex: 1; display: flex; align-items: center; justify-content: center; border-bottom: 1px solid transparent; }
.app svg { width: 14px; height: 14px; }
.run { border-bottom-color: #76b9ed; }
.app.on { background: #46505a; }
.badge { position: absolute; right: 5px; bottom: 3px; width: 8px; height: 8px; border-radius: 4px; background: #d92d45; font-size: 6px; line-height: 8px; text-align: center; }
.tray { margin-left: auto; display: flex; align-items: center; padding-right: 14px; }
.sun { width: 12px; height: 12px; }
.weather { display: flex; gap: 6px; margin: 0 8px 0 6px; }
.tray-icons { display: flex; gap: 4px; }
.tray-icons svg { width: 10px; height: 10px; }
.clock { width: 42px; margin: 0 9px 0 3px; display: flex; flex-direction: column; align-items: center; font-size: 7px; line-height: 11px; }
.note { width: 11px; height: 11px; }

/* Call strip */
.call { height: 72px; display: flex; justify-content: flex-end; }
.participant { width: 133px; background: #171717; display: flex; flex-direction: column; align-items: center; gap: 3px; padding-top: 16px; color: #fff; font-size: 7px; }
.participant .who { align-self: flex-start; margin-left: 8px; }
.avatar { width: 40px; height: 40px; border-radius: 20px; background: #fbe6cd; color: #7f551c; text-align: center; line-height: 40px; font-size: 17px; font-weight: 600; }
```
